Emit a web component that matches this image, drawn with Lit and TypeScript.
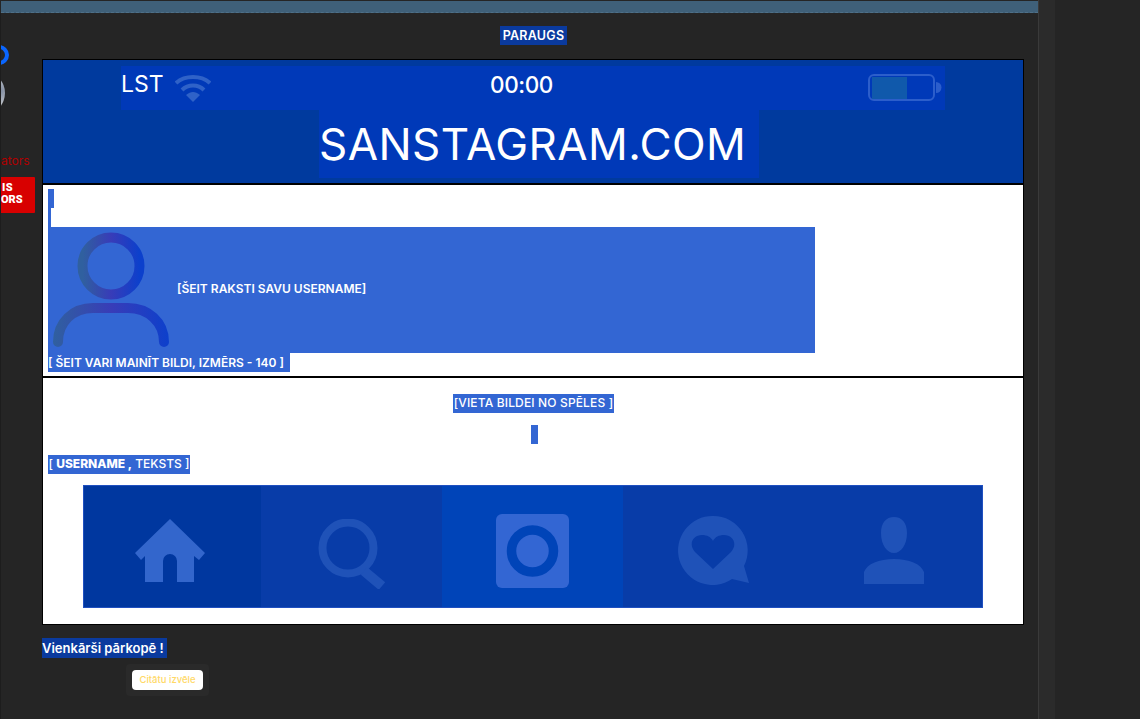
import { LitElement, html, css, svg } from "lit";
import { customElement } from "lit/decorators.js";

const homeIcon = svg`<svg class="home" width="70" height="64" viewBox="0 0 70 64"><path fill="#3366cc" d="M35 0 L70 34 L64 41 L59 37 V63 H42 V42 A7 7 0 0 0 28 42 V63 H10 V37 L6 41 L0 34 Z"/></svg>`;
const searchIcon = svg`<svg class="search" width="68" height="70" viewBox="0 0 68 70"><circle cx="30" cy="29" r="25.5" fill="none" stroke="#1f52b8" stroke-width="8"/><path d="M46 52 L64 67" stroke="#1f52b8" stroke-width="10" fill="none"/></svg>`;
const cameraIcon = svg`<svg width="73" height="74" viewBox="0 0 73 74"><rect width="73" height="74" rx="6" fill="#3366d3"/><circle cx="36.5" cy="37" r="21" fill="#3366d3" stroke="#0044b8" stroke-width="9.5"/></svg>`;
const chatIcon = svg`<svg width="72" height="70" viewBox="0 0 72 70"><path fill="#1f52b8" fill-rule="evenodd" d="M35 0 A34.5 34.5 0 0 1 66 50 L71 67 L54 63 A34.5 34.5 0 1 1 35 0 Z M35 53 L17 36 C10 28 15 19 24 19 C29 19 33 21 35 25 C37 21 41 19 46 19 C55 19 60 28 53 36 Z"/></svg>`;
const userIcon = svg`<svg width="60" height="67" viewBox="0 0 60 67"><path fill="#1f52b8" d="M30 0 C38 0 43 6 43 16 C43 28 37 36 30 36 C23 36 17 28 17 16 C17 6 22 0 30 0 Z M0 67 V55 C3 47 15 42 30 42 C45 42 57 47 60 55 V67 Z"/></svg>`;

@customElement("app-root")
export class AppRoot extends LitElement {
  static styles = css`
    :host {
      display: flex;
      width: 1140px;
      height: 719px;
      overflow: hidden;
      background: #252525;
      font-family: Inter, "Open Sans", "Liberation Sans", sans-serif;
    }
    .strip {
      width: 42px;
      flex: none;
      overflow: hidden;
      display: flex;
      flex-direction: column;
      box-sizing: border-box;
      border-left: 1px solid #1d1d1d;
      margin-top: 13px;
      padding-top: 32px;
    }
    .ring {
      width: 20px;
      height: 20px;
      box-sizing: border-box;
      margin-left: -12px;
      border: 4px solid #0a66ff;
      border-radius: 50%;
    }
    .photo {
      width: 40px;
      height: 42px;
      margin: 7px 0 0 -36px;
      border-radius: 50%;
      background: radial-gradient(circle at 88% 45%, #7f8ba0 0%, #d8d8d8 45%, #a8a8a8 100%);
    }
    .ators {
      margin-top: 40px;
      font-size: 12px;
      line-height: 14px;
      color: #b00000;
      white-space: nowrap;
    }
    .redbtn {
      width: 34px;
      height: 36px;
      margin-top: 9px;
      background: #d80000;
      color: #fff;
      font: 900 11px/12px Roboto, sans-serif;
      padding: 5px 0 0 0;
      box-sizing: border-box;
      border-radius: 0 1px 1px 0;
    }
    .redbtn span { display: block; }
    .redbtn .a { padding-left: 1px; letter-spacing: 0.5px; }
    .main {
      width: 982px;
      flex: none;
      display: flex;
      flex-direction: column;
      padding-top: 1px;
      box-sizing: border-box;
    }
    .topbar {
      height: 11px;
      margin-right: -14px;
      margin-left: -41px;
      background: #3f6079;
      border-bottom: 1px dashed #4f7088;
      flex: none;
    }
    .head {
      align-self: center;
      margin: 13px 0 0 1px;
      height: 19px;
      width: 67px;
      background: #0a3a9e;
      color: #fff;
      font-size: 12.5px;
      font-weight: 600;
      letter-spacing: 0.25px;
      line-height: 19px;
      text-align: center;
      white-space: nowrap;
    }
    .card {
      margin-top: 14px;
      box-sizing: border-box;
      height: 566px;
      border: 1px solid #000;
      background: #fff;
      display: flex;
      flex-direction: column;
    }
    .hero {
      flex: none;
      background: #003a9e;
      border-bottom: 2px solid #000;
      padding-top: 6px;
      box-sizing: border-box;
      height: 125px;
    }
    .status {
      margin-left: 78px;
      width: 824px;
      height: 44px;
      background: #0039b8;
      color: #fff;
      display: grid;
      grid-template-columns: 369px 63px 1fr;
      align-items: center;
      font-size: 23px;
    }
    .status .lg {
      display: flex;
      align-items: center;
      gap: 11px;
    }
    .status .lg span { margin: -8px 0 0 0; }
    .status .time {
      font-weight: 500;
      font-size: 22.5px;
      letter-spacing: -0.4px;
      margin-top: -8px;
      text-align: center;
      white-space: nowrap;
    }
    .status .bat {
      justify-self: end;
      margin-right: 3px;
      display: flex;
    }
    .brand {
      margin-left: 276px;
      width: 440px;
      height: 68px;
      background: #0039b8;
      color: #fff;
      font-size: 44px;
      letter-spacing: 0.45px;
      line-height: 68px;
      white-space: nowrap;
    }
    .sec1 {
      flex: none;
      height: 193px;
      box-sizing: border-box;
      border-bottom: 2px solid #000;
      padding: 4px 0 0 5px;
      display: flex;
      flex-direction: column;
    }
    .caret { width: 6px; height: 19px; background: #3366d3; flex: none; }
    .notch { width: 3px; height: 19px; background: #3366d3; flex: none; }
    .band {
      width: 767px;
      height: 126px;
      flex: none;
      background: #3366d3;
      color: #fff;
      display: flex;
      align-items: center;
      font-size: 12px;
      font-weight: 600;
      white-space: nowrap;
    }
    .band svg { flex: none; }
    .band span { margin-left: 2px; margin-top: -3px; }
    .sel {
      background: #3366d3;
      color: #fff;
      font-size: 12px;
      font-weight: 600;
      height: 19px;
      line-height: 19px;
      white-space: nowrap;
      flex: none;
    }
    .cap { width: 242px; }
    .sec2 {
      flex: 1;
      padding: 16px 0 0 5px;
      display: flex;
      flex-direction: column;
    }
    .spot {
      align-self: flex-start;
      margin-left: 405px;
      width: 161px;
      font-weight: 500;
      letter-spacing: 0.15px;
      line-height: 17px;
      text-align: center;
    }
    .cur {
      margin: 12px 0 0 483px;
      width: 7px;
      height: 19px;
      background: #3366d3;
      flex: none;
    }
    .ut {
      align-self: flex-start;
      margin-top: 11px;
      width: 142px;
      font-weight: 500;
      line-height: 17px;
      text-align: center;
    }
    .ut b { font-weight: 800; }
    .nav {
      margin: 11px 0 0 35px;
      width: 900px;
      height: 123px;
      box-sizing: border-box;
      border: 1px solid #2050c0;
      display: grid;
      grid-template-columns: 177px 181px 181px 1fr;
      flex: none;
    }
    .cell { display: flex; align-items: center; justify-content: center; padding-top: 8px; }
    .c1 { background: #00379f; }
    .c2 { background: #083ca8; }
    .c3 { background: #0044b8; }
    .c4 { background: #083ca8; display: grid; grid-template-columns: 182px 1fr; }
    .c4 > div { display: flex; align-items: center; justify-content: center; padding-top: 8px; }
    .home { margin-right: 5px; margin-top: 1px; }
    .search { margin-top: 6px; }
    .copy {
      align-self: flex-start;
      margin-top: 13px;
      height: 20px;
      width: 125px;
      background: #0a3a9e;
      color: #fff;
      font-size: 13px;
      font-weight: 600;
      line-height: 20px;
      white-space: nowrap;
    }
    .halo {
      align-self: flex-start;
      margin: 6px 0 0 84px;
      padding: 6px;
      background: #2a2a2a;
      border-radius: 4px;
      display: flex;
    }
    .btn {
      width: 71px;
      height: 20px;
      border: 0;
      padding: 0;
      background: #fff;
      border-radius: 4px;
      color: #ffd966;
      font: 500 9.5px/20px Inter, sans-serif;
      text-align: center;
    }
    .gutter { width: 14px; flex: none; }
    .scroll {
      width: 16px;
      flex: none;
      background: #2b2b2b;
      border-left: 1px solid #3a3a3a;
    }
    .rest { flex: 1; }
  `;

  render() {
    return html`
      <div class="strip">
        <div class="ring"></div>
        <div class="photo"></div>
        <div class="ators">ators</div>
        <div class="redbtn"><span class="a">IS</span><span>ORS</span></div>
      </div>
      <div class="main">
        <div class="topbar"></div>
        <div class="head">PARAUGS</div>
        <div class="card">
          <div class="hero">
            <div class="status">
              <div class="lg">
                <span>LST</span>
                <svg width="36" height="30" viewBox="0 0 36 30" fill="none" stroke="#2f62c8" stroke-width="4">
                  <path d="M1 10 C10 2 26 2 35 10" />
                  <path d="M7 17 C13 11 23 11 29 17" />
                  <path d="M11 22 L18 29 L25 22 C20 18 16 18 11 22 Z" fill="#2f62c8" stroke="none" />
                </svg>
              </div>
              <div class="time">00:00</div>
              <div class="bat">
                <svg width="74" height="28" viewBox="0 0 74 28">
                  <rect x="1" y="1" width="65" height="25" rx="5" fill="none" stroke="#2c5ecb" stroke-width="2" />
                  <rect x="4" y="3" width="35" height="22" fill="#1059ab" />
                  <path d="M68 8 A5.5 5.5 0 0 1 68 19 Z" fill="#2c5ecb" />
                </svg>
              </div>
            </div>
            <div class="brand">SANSTAGRAM.COM</div>
          </div>
          <div class="sec1">
            <div class="caret"></div>
            <div class="notch"></div>
            <div class="band">
              <svg width="127" height="126" viewBox="0 0 127 126" fill="none" stroke-width="10">
                <defs>
                  <linearGradient id="g" x1="0" x2="1" y1="0" y2="0">
                    <stop offset="0" stop-color="#30609f" />
                    <stop offset="0.5" stop-color="#383cb8" />
                    <stop offset="1" stop-color="#0c40cc" />
                  </linearGradient>
                  <linearGradient id="gb" gradientUnits="userSpaceOnUse" x1="5" x2="122" y1="0" y2="0">
                    <stop offset="0" stop-color="#30609f" />
                    <stop offset="0.5" stop-color="#383cb8" />
                    <stop offset="1" stop-color="#0c40cc" />
                  </linearGradient>
                </defs>
                <circle cx="63" cy="39" r="28.5" stroke="url(#g)" />
                <path d="M10 115 C10 95 25 81 45 81 H80 C100 81 116 95 116 115" stroke="url(#gb)" stroke-linecap="round" />
              </svg>
              <span>[ŠEIT RAKSTI SAVU USERNAME]</span>
            </div>
            <div class="sel cap">[ ŠEIT VARI MAINĪT BILDI, IZMĒRS - 140 ]</div>
          </div>
          <div class="sec2">
            <div class="sel spot">[VIETA BILDEI NO SPĒLES ]</div>
            <div class="cur"></div>
            <div class="sel ut">[ <b>USERNAME ,</b> TEKSTS ]</div>
            <div class="nav">
              <div class="cell c1">${homeIcon}</div>
              <div class="cell c2">${searchIcon}</div>
              <div class="cell c3">${cameraIcon}</div>
              <div class="c4">
                <div>${chatIcon}</div>
                <div>${userIcon}</div>
              </div>
            </div>
          </div>
        </div>
        <div class="copy">Vienkārši pārkopē !</div>
        <div class="halo"><button class="btn">Citātu izvēle</button></div>
      </div>
      <div class="gutter"></div>
      <div class="scroll"></div>
      <div class="rest"></div>
    `;
  }
}
